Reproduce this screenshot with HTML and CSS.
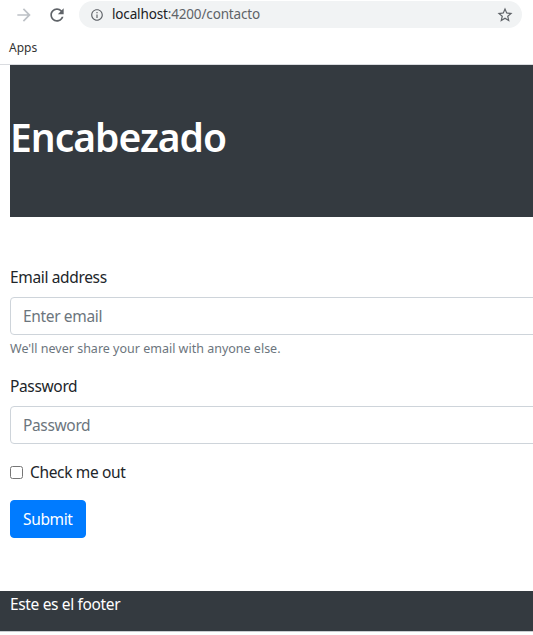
FILE: index.html
```html
<!DOCTYPE html>
<html lang="es">
<head>
<meta charset="utf-8">
<title>contacto</title>
<link rel="stylesheet" href="styles.css">
</head>
<body>
<div class="toolbar">
  <span class="tb-btn fwd">
    <svg viewBox="0 0 24 24" width="20" height="20"><path fill="currentColor" d="M12 4l-1.41 1.41L16.17 11H4v2h12.17l-5.58 5.59L12 20l8-8z"/></svg>
  </span>
  <span class="tb-btn reload">
    <svg viewBox="0 0 24 24" width="20" height="20"><path fill="currentColor" d="M17.65 6.35C16.2 4.9 14.21 4 12 4c-4.42 0-7.99 3.58-7.99 8s3.57 8 7.99 8c3.73 0 6.84-2.55 7.73-6h-2.08c-.82 2.33-3.04 4-5.65 4-3.31 0-6-2.69-6-6s2.69-6 6-6c1.66 0 3.14.69 4.22 1.78L13 11h7V4l-2.35 2.35z"/></svg>
  </span>
  <div class="omnibox">
    <svg class="info" viewBox="0 0 24 24" width="14" height="14"><path fill="currentColor" d="M11 7h2v2h-2zm0 4h2v6h-2zm1-9C6.48 2 2 6.48 2 12s4.48 10 10 10 10-4.48 10-10S17.52 2 12 2zm0 18c-4.41 0-8-3.59-8-8s3.59-8 8-8 8 3.59 8 8-3.59 8-8 8z"/></svg>
    <span class="url"><span class="host">localhost</span>:4200/contacto</span>
    <svg class="star" viewBox="0 0 24 24" width="18" height="18"><path fill="currentColor" d="M22 9.24l-7.19-.62L12 2 9.19 8.63 2 9.24l5.46 4.73L5.82 21 12 17.27 18.18 21l-1.63-7.03L22 9.24zM12 15.4l-3.76 2.27 1-4.28-3.32-2.88 4.38-.38L12 6.1l1.71 4.04 4.38.38-3.32 2.88 1 4.28L12 15.4z"/></svg>
  </div>
</div>
<div class="bookmarks"><span class="apps">Apps</span></div>

<div class="page">
  <div class="main">
    <header class="hero">
      <h1>Encabezado</h1>
    </header>
    <form class="form">
      <div class="group">
        <label class="label">Email address</label>
        <input class="control" type="email" placeholder="Enter email">
        <small class="help">We'll never share your email with anyone else.</small>
      </div>
      <div class="group">
        <label class="label">Password</label>
        <input class="control" type="password" placeholder="Password">
      </div>
      <div class="group check">
        <input class="check-input" type="checkbox" id="c1">
        <label class="check-label" for="c1">Check me out</label>
      </div>
      <button class="btn" type="button">Submit</button>
    </form>
  </div>
  <footer class="footer">Este es el footer</footer>
</div>
</body>
</html>
```

FILE: styles.css
```css
* { box-sizing: border-box; }
html, body { margin: 0; padding: 0; background: #fff; overflow: hidden; }
body {
  font-family: "Noto Sans", "Open Sans", sans-serif;
  color: #212529;
  font-size: 16px;
  line-height: 1.5;
}

.toolbar {
  height: 30px;
  display: flex;
  align-items: center;
  padding-left: 14px;
  padding-right: 11px;
}
.tb-btn { display: flex; width: 20px; height: 20px; }
.tb-btn.fwd { color: #bdc1c6; }
.tb-btn.reload { color: #5f6368; margin-left: 13px; }
.omnibox {
  flex: 1;
  margin-left: 12px;
  height: 27px;
  margin-top: -1px;
  border-radius: 14px;
  background: #f1f3f4;
  display: flex;
  align-items: center;
  padding-left: 11px;
  padding-right: 8px;
}
.info { color: #5f6368; }
.url {
  margin-left: 8px;
  font-family: "Noto Sans", sans-serif;
  font-size: 13.5px;
  color: #5f6368;
  flex: 1;
  letter-spacing: -0.15px;
}
.host { color: #202124; }
.star { color: #5f6368; }

.bookmarks {
  height: 35px;
  border-bottom: 1px solid #dadce0;
  padding-left: 9px;
  display: flex;
  align-items: center;
  padding-top: 2px;
}
.apps { font-size: 12px; color: #333; }

.page { overflow: hidden; }
.main { padding-left: 10px; width: calc(100% + 20px); }

.hero {
  background: #343a40;
  color: #fff;
  padding: 48px 0;
}
.hero h1 {
  margin: 0 0 8px;
  font-size: 39px;
  font-weight: 600;
  line-height: 48px;
  letter-spacing: -1px;
}

.form { padding-top: 48px; }
.group { margin-bottom: 16px; display: flex; flex-direction: column; }
.label, .check-label, .control, .btn, .footer {
  font-size: 15.5px;
  line-height: 24px;
  letter-spacing: -0.35px;
}
.label { display: block; margin-bottom: 8px; }
.control {
  height: 38px;
  padding: 6px 12px;
  font-family: inherit;
  color: #495057;
  border: 1px solid #ced4da;
  border-radius: 4px;
  width: 100%;
}
.control::placeholder { color: #6c757d; opacity: 1; }
.help { display: block; margin-top: 4px; font-size: 12.5px; color: #6c757d; line-height: 19px; }

.check { flex-direction: row; align-items: center; height: 24px; }
.check-input { margin: 0 7px 0 0; width: 13px; height: 13px; }

.btn {
  display: block;
  height: 38px;
  padding: 0 12px;
  font-family: inherit;
  color: #fff;
  background: #007bff;
  border: 1px solid #007bff;
  border-radius: 4px;
}

.footer {
  margin-top: 53px;
  background: #343a40;
  color: #fff;
  padding: 1px 10px 15px;
  border-bottom: 1px solid #c9ccd0;
}
```
